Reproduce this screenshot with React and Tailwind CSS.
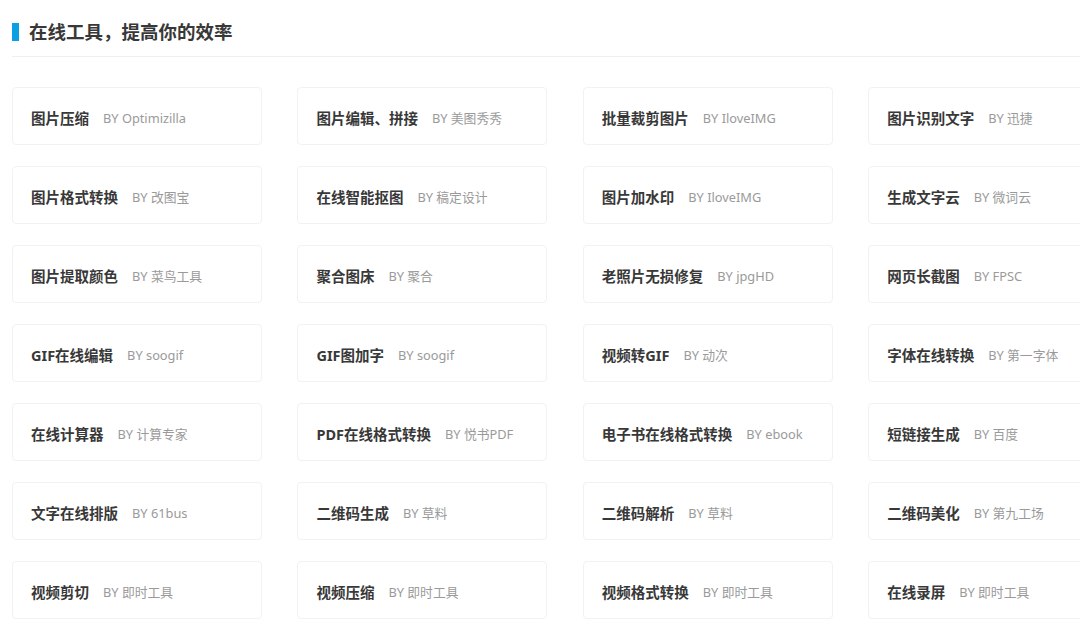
import React from 'react'

const tools = [
    ['图片压缩', 'Optimizilla'],
    ['图片编辑、拼接', '美图秀秀'],
    ['批量裁剪图片', 'IloveIMG'],
    ['图片识别文字', '迅捷'],
    ['图片格式转换', '改图宝'],
    ['在线智能抠图', '稿定设计'],
    ['图片加水印', 'IloveIMG'],
    ['生成文字云', '微词云'],
    ['图片提取颜色', '菜鸟工具'],
    ['聚合图床', '聚合'],
    ['老照片无损修复', 'jpgHD'],
    ['网页长截图', 'FPSC'],
    ['GIF在线编辑', 'soogif'],
    ['GIF图加字', 'soogif'],
    ['视频转GIF', '动次'],
    ['字体在线转换', '第一字体'],
    ['在线计算器', '计算专家'],
    ['PDF在线格式转换', '悦书PDF'],
    ['电子书在线格式转换', 'ebook'],
    ['短链接生成', '百度'],
    ['文字在线排版', '61bus'],
    ['二维码生成', '草料'],
    ['二维码解析', '草料'],
    ['二维码美化', '第九工场'],
    ['视频剪切', '即时工具'],
    ['视频压缩', '即时工具'],
    ['视频格式转换', '即时工具'],
    ['在线录屏', '即时工具'],
]

function ToolCard({ name, by }) {
    return (
        <div className="h-[58px] rounded-[4px] border border-[#f2f2f2] bg-white flex items-center pl-[18px] pt-[6px]">
            <span className="text-[14.5px] font-bold text-[#383838]">{name}</span>
            <span className="ml-[14px] text-[12.8px] text-[#9a9a9a]">BY {by}</span>
        </div>
    )
}

export default function App() {
    return (
        <div
            className="w-[1080px] h-[624px] overflow-hidden bg-white pl-[12px] pt-[23px]"
            style={{ fontFamily: '"Noto Sans", "Noto Sans CJK SC", sans-serif' }}
        >
            <div className="flex items-center h-[18px]">
                <span className="w-[7px] h-[18px] bg-[#0aa1e4]" />
                <h1 className="ml-[10px] text-[18.5px] font-bold text-[#383838] leading-none">在线工具，提高你的效率</h1>
            </div>
            <div className="mt-[15px] h-px bg-[#efefef]" />
            <div className="mt-[30px] grid grid-cols-[repeat(4,250px)] gap-x-[35.4px] gap-y-[21px] w-max">
                {tools.map(([name, by]) => (
                    <ToolCard key={name + by} name={name} by={by} />
                ))}
            </div>
        </div>
    )
}
